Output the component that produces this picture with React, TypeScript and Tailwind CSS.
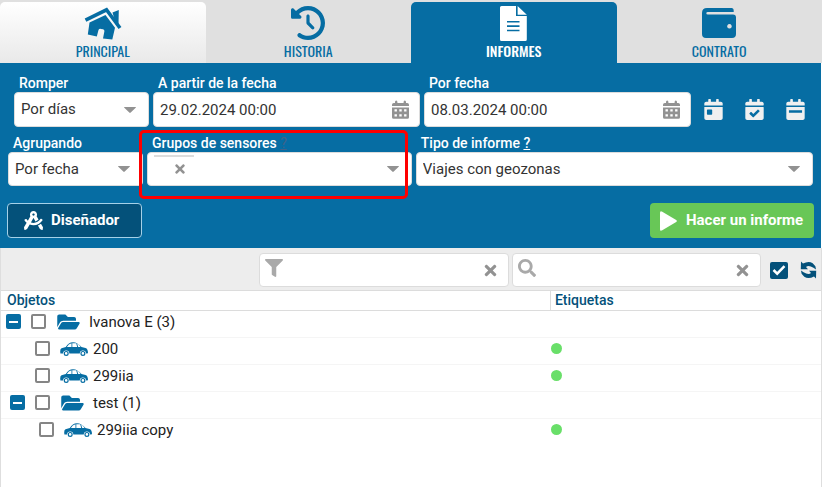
import { useState, type ReactNode } from 'react'
import { FaCalendarCheck, FaCalendarDay, FaDraftingCompass, FaFilter, FaFolderOpen, FaSearch, FaTimes } from 'react-icons/fa'
import { FaClockRotateLeft } from 'react-icons/fa6'

function HouseIcon() {
  return (
    <svg viewBox="0 0 38 33" className="h-[33px] w-[38px]" fill="currentColor">
      <path d="M1.500 13.200 22.500 2.800 36 21" fill="none" stroke="currentColor" strokeWidth="3.600" />
      <path d="M28.500 5.500 34.800 3l-.300 13.500-2.500 1z" />
      <path d="M5.500 15.500 21.500 8 31 20.800 28.300 32.600 19 31.400 20.400 24.200Q20.600 22.600 19 22.300L17 21.900Q15 21.600 14.500 23L12.800 29.600 3.800 27.600z" />
    </svg>
  )
}

function FileIcon() {
  return (
    <svg viewBox="0 0 27 35" className="h-[35px] w-[27px]" fill="currentColor">
      <path d="M1.500 0H16v10h10.800v23.500q0 1.500-1.500 1.500H1.500Q0 35 0 33.500v-32Q0 0 1.500 0zM7 15v1.600h12.500V15zm0 4.300v1.600h12.500v-1.600zm0 4.400v1.600h12.500v-1.600z" />
      <path d="M17.600 0 26.800 8.700h-9.200z" />
    </svg>
  )
}

function WalletIcon() {
  return (
    <svg viewBox="0 0 34 30" className="h-[30px] w-[34px]" fill="currentColor">
      <path fillRule="evenodd" d="M5 0h24.500q2.200 0 2.200 2.800V4.100H5.800q-1.500 0-1.500 1.200T5.800 6.500H31q3 0 3 3V26q0 4-4 4H4q-4 0-4-4V5q0-5 5-5zm22.400 16a2.300 2.300 0 1 0 .1 0z" />
    </svg>
  )
}

function CalendarIcon() {
  return (
    <svg viewBox="0 0 17 19" className="h-[19px] w-[17px]" fill="currentColor">
      <path d="M3 2q0-1.600 1.200-1.600T5.400 2v1h6.200V2q0-1.600 1.200-1.600T14 2v1h1.200Q17 3 17 4.800V6H0V4.800Q0 3 1.800 3H3z" />
      <path fillRule="evenodd" d="M0 7.400h17v9.800q0 1.600-1.600 1.600H1.600Q0 18.800 0 17.200zM2.500 9.200v2.300h2.400V9.200zm4.800 0v2.300h2.400V9.200zm4.800 0v2.300h2.400V9.200zM2.500 14.200v2.300h2.400v-2.300zm4.800 0v2.300h2.400v-2.300zm4.800 0v2.300h2.400v-2.300z" />
    </svg>
  )
}

function CalendarRangeIcon() {
  return (
    <svg viewBox="0 0 448 512" className="h-[21px] w-[19px]" fill="currentColor">
      <path d="M0 464c0 26.500 21.500 48 48 48h352c26.500 0 48-21.500 48-48V192H0zM64 272h320v64H64zM448 112v48H0v-48c0-26.500 21.500-48 48-48h48V16c0-9 7-16 16-16h32c9 0 16 7 16 16v48h128V16c0-9 7-16 16-16h32c9 0 16 7 16 16v48h48c26.500 0 48 21.500 48 48z" fillRule="evenodd" />
    </svg>
  )
}

function PlayIcon() {
  return (
    <svg viewBox="0 0 17 20" className="h-[20px] w-[17px]" fill="currentColor">
      <path d="M0 1.800Q0-.6 2.300.7L16.200 9q1.300 1 0 2L2.300 19.300Q0 20.600 0 18.200z" />
    </svg>
  )
}

function RefreshIcon() {
  return (
    <svg viewBox="0 0 17 18" className="h-[18px] w-[17px]" fill="currentColor">
      <path d="M1 .5 3 2.600Q8.500-.5 12.700 2.200L15.400 5.200 16 8.400Q13.500 6.300 10.800 5.400 7.600 4.500 6 6L8 8.200H.8z" />
      <path d="M16 17.500 14 15.400Q8.500 18.500 4.300 15.800L1.600 12.800 1 9.600Q3.500 11.700 6.200 12.600 9.400 13.500 11 12L9 9.800h7.200z" />
    </svg>
  )
}

function CarIcon() {
  return (
    <svg viewBox="0 0 28 14" className="h-[14px] w-[28px]" fill="currentColor">
      <path
        fillRule="evenodd"
        d="M.4 11.500Q-.3 7 1.500 6.200L5.800 5Q8.500.2 13 .2T21.500 4.900L25.500 6Q28 6.800 28 11.200L26 11.500A3.100 3.100 0 0 0 19.800 11.500H9.300A3.100 3.100 0 0 0 3.100 11.500zM6.900 5H11.500V1.200Q8.400 1.800 6.900 5zM12.300 5H17.200L16.200 1.300H12.300zM18.200 5H20.600Q19.300 2.500 17.100 1.500z"
      />
      <circle cx="6.200" cy="11.400" r="1.900" fill="none" stroke="currentColor" strokeWidth="1.200" />
      <circle cx="22.900" cy="11.400" r="1.900" fill="none" stroke="currentColor" strokeWidth="1.200" />
    </svg>
  )
}

function Caret() {
  return (
    <svg viewBox="0 0 12 6" className="pointer-events-none absolute right-[12px] h-[6px] w-[12px] text-[#929292]" fill="currentColor">
      <path d="M.5 0h11q.8 0 .2.700L6.700 5.600q-.7.700-1.400 0L.3.700Q-.3 0 .5 0z" />
    </svg>
  )
}

const tabs = [
  { title: 'PRINCIPAL', icon: <HouseIcon />, style: 'bg-linear-to-b from-white to-[#e9e9e9] text-[#066da3]' },
  { title: 'HISTORIA', icon: <FaClockRotateLeft className="h-[34px] w-[34px]" />, style: 'text-[#066da3]' },
  { title: 'INFORMES', icon: <FileIcon />, style: 'bg-[#066da3] text-white font-medium' },
  { title: 'CONTRATO', icon: <WalletIcon />, style: 'text-[#066da3]' },
]

const rows = [
  { name: 'Ivanova E (3)', group: true, indent: 'pl-[5px]' },
  { name: '200', group: false, indent: 'pl-[9px]' },
  { name: '299iia', group: false, indent: 'pl-[9px]' },
  { name: 'test (1)', group: true, indent: 'pl-[9px]' },
  { name: '299iia copy', group: false, indent: 'pl-[13px]' },
]

const box = 'relative flex items-center rounded-[4px] border border-[#dcdcdc] bg-white'
const control = 'h-full w-full min-w-0 appearance-none bg-transparent px-[6px] text-[15px] text-[#333] outline-none'

type FieldProps = { id: string; label: ReactNode; className: string; children: ReactNode }

function Field({ id, label, className, children }: FieldProps) {
  return (
    <div className={className}>
      <label htmlFor={id} className="block h-[17px] pl-[5px] text-[14px] leading-[17px] font-medium whitespace-nowrap text-white">
        {label}
      </label>
      {children}
    </div>
  )
}

function DateField({ id, label, value }: { id: string; label: string; value: string }) {
  return (
    <Field id={id} label={label} className="min-w-0 flex-1">
      <div className={`${box} h-[35px] pr-[10px]`}>
        <input id={id} className={control} defaultValue={value} />
        <button type="button" aria-label="Calendario" className="text-[#929292]">
          <CalendarIcon />
        </button>
      </div>
    </Field>
  )
}

export default function App() {
  const [checked, setChecked] = useState<string[]>([])

  const toggle = (name: string) =>
    setChecked((prev) => (prev.includes(name) ? prev.filter((n) => n !== name) : [...prev, name]))

  return (
    <div className="flex min-h-screen flex-col bg-white font-['Roboto',sans-serif] text-[15px]">
      {/* Tabs */}
      <nav className="grid grid-cols-4 bg-[#e0e0e0] pt-[2px]">
        {tabs.map((tab) => (
          <button
            key={tab.title}
            type="button"
            className={`flex h-[61px] flex-col items-center rounded-t-[5px] font-['Oswald','Roboto_Condensed','Liberation_Sans_Narrow',sans-serif] ${tab.style}`}
          >
            <span className="mt-[3px] flex h-[36px] items-center">{tab.icon}</span>
            <span className="text-[14px] leading-[20px]">{tab.title}</span>
          </button>
        ))}
      </nav>

      {/* Report settings */}
      <form className="mr-px bg-[#066da3] pt-[12px] pb-[10px]" onSubmit={(e) => e.preventDefault()}>
        <div className="flex items-end gap-[4px] pr-[16px] pl-[14px]">
          <Field id="split" label="Romper" className="w-[135px]">
            <div className={`${box} h-[35px]`}>
              <select id="split" className={control}>
                <option>Por días</option>
              </select>
              <Caret />
            </div>
          </Field>
          <DateField id="from" label="A partir de la fecha" value="29.02.2024 00:00" />
          <DateField id="to" label="Por fecha" value="08.03.2024 00:00" />
          <div className="ml-[9px] flex h-[35px] items-center gap-[22px] text-[#f0f0f0]">
            <button type="button" aria-label="Hoy">
              <FaCalendarDay className="h-[21px] w-[19px]" />
            </button>
            <button type="button" aria-label="Ayer">
              <FaCalendarCheck className="h-[21px] w-[19px]" />
            </button>
            <button type="button" aria-label="Semana">
              <CalendarRangeIcon />
            </button>
          </div>
        </div>

        <div className="mt-[8px] flex gap-[4px] px-[8px]">
          <Field id="grouping" label="Agrupando" className="w-[135px]">
            <div className={`${box} h-[34px]`}>
              <select id="grouping" className={control}>
                <option>Por fecha</option>
              </select>
              <Caret />
            </div>
          </Field>
          <Field
            id="sensors"
            label={<>Grupos de sensores <span className="font-normal text-[#3f6389] underline">?</span></>}
            className="relative min-w-0 flex-2"
          >
            <div className={`${box} h-[34px] pl-[6px]`}>
              <button
                type="button"
                aria-label="Quitar"
                className="mt-[2px] flex h-[25px] w-[40px] shrink-0 items-center justify-center self-start border-t-2 border-[#dcdcdc] pl-[12px] text-[#929292]"
              >
                <FaTimes className="h-[14px] w-[14px]" />
              </button>
              <select id="sensors" className={control}>
                <option></option>
              </select>
              <Caret />
            </div>
            <div className="pointer-events-none absolute -top-[5px] right-[4px] -bottom-[13px] -left-[8px] rounded-[5px] border-3 border-[#fe0000]" />
          </Field>
          <Field
            id="report"
            label={<>Tipo de informe <a href="#ayuda" className="underline">?</a></>}
            className="min-w-0 flex-3"
          >
            <div className={`${box} h-[34px]`}>
              <select id="report" className={control}>
                <option>Viajes con geozonas</option>
              </select>
              <Caret />
            </div>
          </Field>
        </div>

        <div className="mt-[17px] flex justify-between px-[7px] text-[15px] font-bold text-white">
          <button type="button" className="flex h-[35px] w-[135px] items-center gap-[8px] rounded-[4px] border border-[#a6d1e8] bg-[#04517a] pl-[16px]">
            <FaDraftingCompass className="h-[19px] w-[19px]" />
            Diseñador
          </button>
          <button type="submit" className="flex h-[35px] w-[164px] items-center gap-[9px] rounded-[4px] bg-[#68c757] pl-[10px] whitespace-nowrap">
            <PlayIcon />
            Hacer un informe
          </button>
        </div>
      </form>

      {/* Objects */}
      <section className="flex-1 border-r border-l border-[#dedede]">
        <div className="flex items-center justify-end gap-[3px] border-b border-[#dcdcdc] bg-[#ededed] pt-[5px] pr-[4px] pb-[3px]">
          <div className={`${box} h-[34px] w-[250px] px-[5px]`}>
            <FaFilter className="mb-[4px] h-[18px] w-[18px] shrink-0 text-[#a9a9a9]" />
            <input aria-label="Filtro" className={control} />
            <button type="button" aria-label="Borrar filtro" className="mr-[4px] text-[#929292]">
              <FaTimes className="h-[17px] w-[17px]" />
            </button>
          </div>
          <div className={`${box} h-[34px] w-[249px] px-[5px]`}>
            <FaSearch className="mb-[4px] h-[18px] w-[18px] shrink-0 text-[#a9a9a9]" />
            <input aria-label="Buscar" className={control} />
            <button type="button" aria-label="Borrar búsqueda" className="mr-[4px] text-[#929292]">
              <FaTimes className="h-[17px] w-[17px]" />
            </button>
          </div>
          <label className="ml-[6px] flex h-[17px] w-[18px] items-center justify-center rounded-[2px] bg-[#04517a] text-white">
            <input type="checkbox" defaultChecked aria-label="Seleccionar todo" className="sr-only" />
            <svg viewBox="0 0 14 12" className="h-[12px] w-[14px]" fill="none" stroke="currentColor" strokeWidth="2.500">
              <path d="M1.500 6 5.200 9.700 12.500 2.200" />
            </svg>
          </label>
          <button type="button" aria-label="Actualizar" className="ml-[9px] text-[#04517a]">
            <RefreshIcon />
          </button>
        </div>

        <table className="w-full table-fixed border-collapse text-left">
          <thead>
            <tr className="h-[19px] border-b border-[#dcdcdc] text-[14px] leading-[18px] text-[#04517a]">
              <th className="w-[67%] border-r border-[#dcdcdc] pl-[6px] font-medium">Objetos</th>
              <th className="pl-[4px] font-medium">Etiquetas</th>
            </tr>
          </thead>
          <tbody>
            {rows.map((row, i) => (
              <tr key={row.name} className={i < rows.length - 1 ? 'h-[27px] border-b border-[#f5f5f5]' : 'h-[27px]'}>
                <td className="px-0 pt-0 pb-[4px]">
                  <div className={`flex items-center text-[#066da3] ${row.indent}`}>
                    {row.group ? (
                      <button type="button" aria-label="Contraer" className="flex h-[15px] w-[15px] items-center justify-center rounded-[2px] bg-[#066da3]">
                        <span className="h-[2px] w-[9px] bg-white" />
                      </button>
                    ) : (
                      <span className="w-[15px]" />
                    )}
                    <input
                      id={`row-${i}`}
                      type="checkbox"
                      checked={checked.includes(row.name)}
                      onChange={() => toggle(row.name)}
                      className="ml-[10px] h-[15px] w-[15px] appearance-none rounded-[2px] border-2 border-[#858585] bg-white checked:bg-[#066da3]"
                    />
                    <span className="ml-[10px] w-[29px]">
                      {row.group ? <FaFolderOpen className="ml-px h-[20px] w-[23px]" /> : <CarIcon />}
                    </span>
                    <label htmlFor={`row-${i}`} className="ml-[4px] leading-[20px] text-[#222]">
                      {row.name}
                    </label>
                  </div>
                </td>
                <td className="px-0 pt-0 pb-[4px]">
                  {!row.group && <div className="ml-px h-[11px] w-[11px] rounded-full bg-[#69df69]" />}
                </td>
              </tr>
            ))}
          </tbody>
        </table>
      </section>
    </div>
  )
}
